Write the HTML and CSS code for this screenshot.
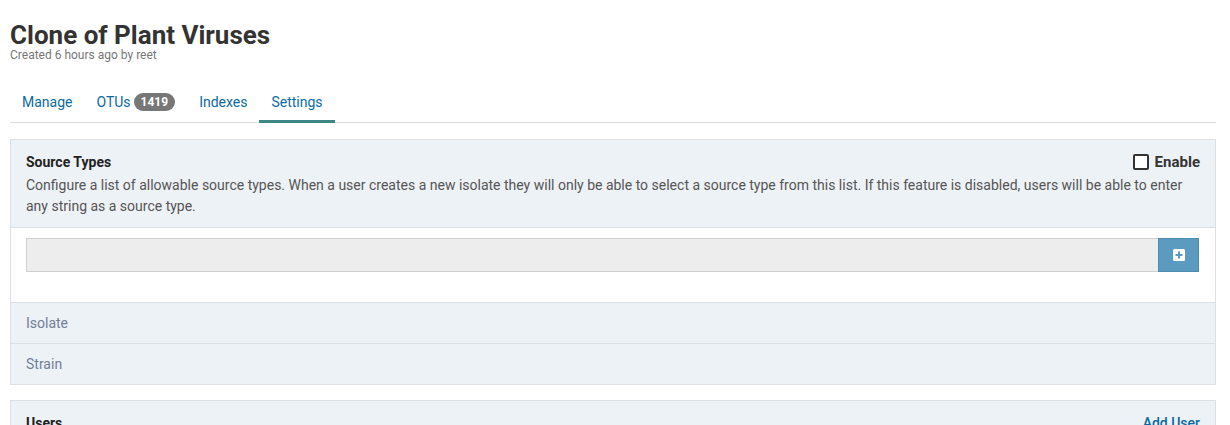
FILE: index.html
```html
<!DOCTYPE html>
<html>
<head>
<meta charset="utf-8">
<link rel="stylesheet" href="styles.css">
</head>
<body>
<div class="page">
  <header class="ref-header">
    <h1 class="title">Clone of Plant Viruses</h1>
    <div class="subtitle">Created 6 hours ago by reet</div>
  </header>
  <nav class="tabs">
    <a class="tab">Manage</a>
    <a class="tab">OTUs <span class="badge">1419</span></a>
    <a class="tab">Indexes</a>
    <a class="tab active">Settings</a>
  </nav>

  <section class="panel first">
    <div class="panel-head">
      <div class="head-row">
        <strong class="panel-title">Source Types</strong>
        <label class="check"><span class="box"></span><span class="check-label">Enable</span></label>
      </div>
      <p class="desc">Configure a list of allowable source types. When a user creates a new isolate they will only be able to select a source type from this list. If this feature is disabled, users will be able to enter any string as a source type.</p>
    </div>
    <div class="panel-body">
      <div class="input-group">
        <div class="input"></div>
        <button class="add-btn">
          <svg width="12" height="12" viewBox="0 0 12 12"><rect x="0" y="0" width="12" height="12" rx="1.5" fill="#fff"/><rect x="5" y="2.5" width="2" height="7" fill="#5b9bbf"/><rect x="2.5" y="5" width="7" height="2" fill="#5b9bbf"/></svg>
        </button>
      </div>
    </div>
    <div class="item">Isolate</div>
    <div class="item last">Strain</div>
  </section>

  <section class="panel">
    <div class="panel-head users">
      <div class="head-row">
        <strong class="panel-title">Users</strong>
        <a class="link">Add User</a>
      </div>
    </div>
  </section>
</div>
</body>
</html>
```

FILE: styles.css
```css
* { box-sizing: border-box; }
html, body { margin: 0; padding: 0; background: #fff; }
body { font-family: Roboto, "Noto Sans", sans-serif; color: #333; }
.page { padding: 0 14px 0 10px; }
.ref-header { padding-top: 21px; }
.title { margin: 0; font-size: 26px; font-weight: 700; line-height: 28px; color: #333; }
.subtitle { font-size: 12px; color: #777; line-height: 13px; margin-top: 0; }
.tabs { display: flex; border-bottom: 1px solid #ddd; margin-top: 20px; }
.tab { font-size: 14px; color: #0b6aa6; padding: 10px 12px 9px; line-height: 20px; border-bottom: 2px solid transparent; margin-bottom: -1px; display: flex; align-items: center; }
.tab.active { border-bottom: 3px solid #3d8785; padding-bottom: 8px; }
.badge { display: inline-block; background: #777; color: #fff; font-weight: 700; font-size: 12px; line-height: 18px; padding: 0 7px; border-radius: 10px; margin-left: 3px; }
.panel { border: 1px solid #dcdfe3; margin-top: 15px; background: #edf2f7; }
.panel.first { margin-top: 16px; }
.panel-head { padding: 12px 15px 10px; border-bottom: 1px solid #dcdfe3; }
.head-row { display: flex; justify-content: space-between; align-items: center; line-height: 20px; }
.panel-title { font-size: 14px; font-weight: 700; color: #222; }
.check { display: flex; align-items: center; gap: 6px; }
.box { width: 16px; height: 16px; border: 2px solid #333; border-radius: 2px; background: #fff; }
.check-label { font-size: 15px; font-weight: 700; color: #333; }
.desc { margin: 3px 0 0; font-size: 14px; line-height: 21px; color: #555; }
.panel-body { background: #fff; padding: 10px 16px 30px 15px; border-bottom: 1px solid #dcdfe3; }
.input-group { display: flex; height: 34px; }
.input { flex: 1; background: #ededed; border: 1px solid #cfcfcf; border-right: none; }
.add-btn { width: 41px; border: 1px solid #4d8db0; background: #5b9bbf; display: flex; align-items: center; justify-content: center; padding: 0; }
.item { padding: 10px 15px; line-height: 20px; font-size: 14px; color: #718096; border-bottom: 1px solid #dcdfe3; }
.item.last { border-bottom: none; }
.users { border-bottom: none; padding-top: 12px; }
.link { font-size: 14px; font-weight: 500; color: #0b6aa6; }
```
